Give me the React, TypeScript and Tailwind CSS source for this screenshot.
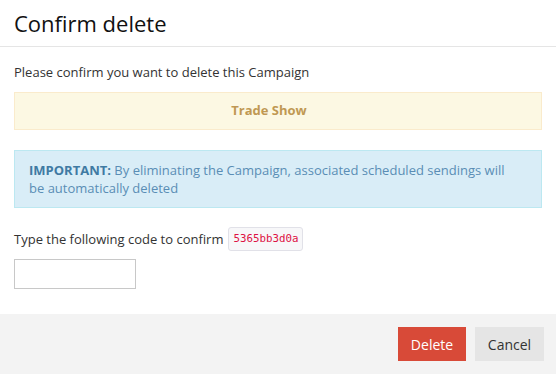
import React, { useState } from "react";

export default function App() {
  const [code, setCode] = useState("");

  return (
    <div className="w-[556px] h-[374px] bg-white flex flex-col font-['Open_Sans',sans-serif] text-[13px] text-[#333]">
      <div className="h-[47px] px-[14px] flex items-center border-b border-[#e5e5e5]">
        <h4 className="text-[22px] leading-none text-[#111] font-normal">Confirm delete</h4>
      </div>

      <div className="flex-1 px-[14px] pt-[15px]">
        <p className="leading-[20px]">Please confirm you want to delete this Campaign</p>

        <div className="mt-[10px] h-[38px] pr-[18px] flex items-center justify-center bg-[#fcf8e3] border border-[#faebcc] text-[#c09853] font-bold">
          Trade Show
        </div>

        <div className="mt-[20px] pl-[14px] pr-[32px] py-[10px] bg-[#d9edf7] border border-[#bce8f1] text-[#5a8db5] leading-[18px]">
          <strong className="font-bold text-[#3f7aa3]">IMPORTANT:</strong> By eliminating the Campaign, associated scheduled sendings will be automatically deleted
        </div>

        <div className="mt-[19px] flex items-center gap-[5px] leading-[20px]">
          <span>Type the following code to confirm</span>
          <code className="px-[4px] py-[1px] rounded-[3px] bg-[#f7f7f9] border border-[#e1e1e8] text-[#dd1144] text-[10.8px] font-['DejaVu_Sans_Mono',monospace]">
            5365bb3d0a
          </code>
        </div>

        <input
          value={code}
          onChange={(e) => setCode(e.target.value)}
          className="mt-[8px] block w-[122px] h-[30px] border border-[#c8c8c8] px-2 outline-none"
        />
      </div>

      <div className="h-[60px] bg-[#f3f3f3] flex items-center justify-end gap-[9px] pr-[12px]">
        <button className="h-[34px] w-[68px] bg-[#d84a38] text-white text-[14px]">Delete</button>
        <button className="h-[34px] w-[69px] bg-[#e5e5e5] text-[#333] text-[14px]">Cancel</button>
      </div>
    </div>
  );
}
